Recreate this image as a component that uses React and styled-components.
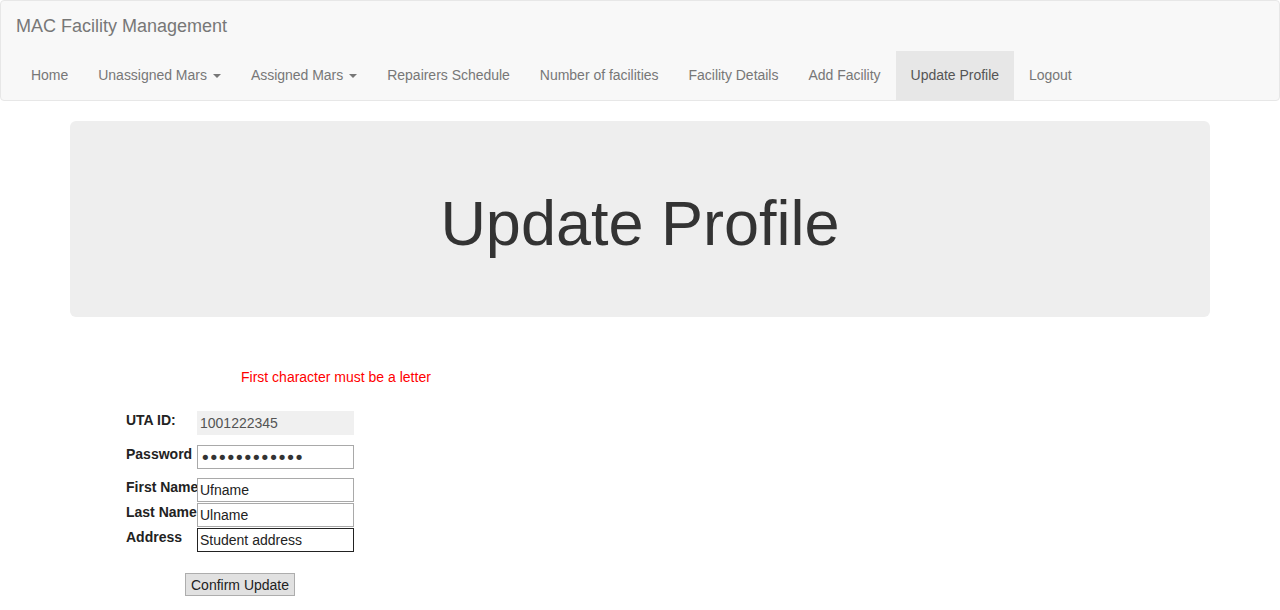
import React from 'react';
import styled, { createGlobalStyle } from 'styled-components';

const GlobalStyle = createGlobalStyle`
  * {
    box-sizing: border-box;
  }

  body {
    margin: 0;
    background: #fff;
    color: #333;
    font-family: "Liberation Sans", Arial, Helvetica, sans-serif;
    font-size: 14px;
    line-height: 1.42857143;
  }
`;

const Navbar = styled.nav`
  background: #f8f8f8;
  border: 1px solid #e7e7e7;
  border-radius: 4px;
  margin-bottom: 20px;
  padding: 0 15px;
`;

const Brand = styled.a`
  display: block;
  height: 50px;
  padding: 15px 0;
  font-size: 18px;
  line-height: 20px;
  color: #777;
  text-decoration: none;
`;

const NavList = styled.ul`
  display: flex;
  list-style: none;
  margin: 0 0 -1px;
  padding: 0;
`;

const NavLink = styled.a`
  display: block;
  padding: 14px 15px 16px;
  line-height: 20px;
  letter-spacing: -0.02px;
  color: ${(p) => (p.$active ? '#555' : '#777')};
  background: ${(p) => (p.$active ? '#e7e7e7' : 'transparent')};
  text-decoration: none;
`;

const Caret = styled.span`
  display: inline-block;
  width: 0;
  height: 0;
  margin-left: 6px;
  vertical-align: middle;
  border-top: 4px solid #777;
  border-left: 4px solid transparent;
  border-right: 4px solid transparent;
`;

const Container = styled.main`
  width: 1140px;
  margin: 0 auto;
`;

const Jumbotron = styled.section`
  background: #eee;
  border-radius: 6px;
  padding: 48px 60px;
  text-align: center;
`;

const Title = styled.h1`
  margin: 20px 0 11px;
  font-size: 63px;
  font-weight: 500;
  line-height: 69px;
  color: #333;
`;

const ErrorMsg = styled.p`
  margin: 50px 0 0 171px;
  color: #f00;
  line-height: 20px;
`;

const Form = styled.form`
  margin: 24px 0 0 56px;
`;

const FieldRow = styled.div`
  display: flex;
  align-items: flex-start;
  margin-bottom: ${(p) => p.$gap}px;
`;

const Label = styled.label`
  width: 71px;
  margin-top: -1px;
  font-weight: bold;
  line-height: 20px;
  color: #222;
  white-space: nowrap;
`;

const Input = styled.input`
  width: 157px;
  height: 24px;
  padding: 0 2px;
  font-family: "Liberation Sans", Arial, sans-serif;
  font-size: 14px;
  color: ${(p) => (p.readOnly ? '#545454' : '#222')};
  background: ${(p) => (p.readOnly ? '#f0f0f0' : '#fff')};
  border: 1px solid ${(p) => (p.readOnly ? '#f0f0f0' : p.$focused ? '#222' : '#a9a9a9')};
  outline: none;

  &[type='password'] {
    font-family: "DejaVu Sans", sans-serif;
    font-size: 18px;
    letter-spacing: -2.1px;
    color: #333;
  }
`;

const SubmitButton = styled.button`
  margin: 21px 0 0 59px;
  height: 23px;
  padding: 1px 5px;
  font-family: "Liberation Sans", Arial, sans-serif;
  font-size: 14px;
  color: #222;
  background: #e1e1e1;
  border: 1px solid #adadad;
`;

const links = [
  { label: 'Home' },
  { label: 'Unassigned Mars', caret: true },
  { label: 'Assigned Mars', caret: true },
  { label: 'Repairers Schedule' },
  { label: 'Number of facilities' },
  { label: 'Facility Details' },
  { label: 'Add Facility' },
  { label: 'Update Profile', active: true },
  { label: 'Logout' },
];

const fields = [
  { label: 'UTA ID:', value: '1001222345', readOnly: true, gap: 10 },
  { label: 'Password', value: 'password1234', type: 'password', gap: 9 },
  { label: 'First Name', value: 'Ufname', gap: 1 },
  { label: 'Last Name', value: 'Ulname', gap: 1 },
  { label: 'Address', value: 'Student address', focused: true, gap: 0 },
];

export default function App() {
  return (
    <>
      <GlobalStyle />
      <Navbar>
        <Brand href="#">MAC Facility Management</Brand>
        <NavList>
          {links.map((l) => (
            <li key={l.label}>
              <NavLink href="#" $active={l.active}>
                {l.label}
                {l.caret && <Caret />}
              </NavLink>
            </li>
          ))}
        </NavList>
      </Navbar>
      <Container>
        <Jumbotron>
          <Title>Update Profile</Title>
        </Jumbotron>
        <ErrorMsg>First character must be a letter</ErrorMsg>
        <Form onSubmit={(e) => e.preventDefault()}>
          {fields.map((f) => (
            <FieldRow key={f.label} $gap={f.gap}>
              <Label>{f.label}</Label>
              <Input
                type={f.type || 'text'}
                defaultValue={f.value}
                readOnly={f.readOnly}
                $focused={f.focused}
              />
            </FieldRow>
          ))}
          <SubmitButton type="submit">Confirm Update</SubmitButton>
        </Form>
      </Container>
    </>
  );
}
